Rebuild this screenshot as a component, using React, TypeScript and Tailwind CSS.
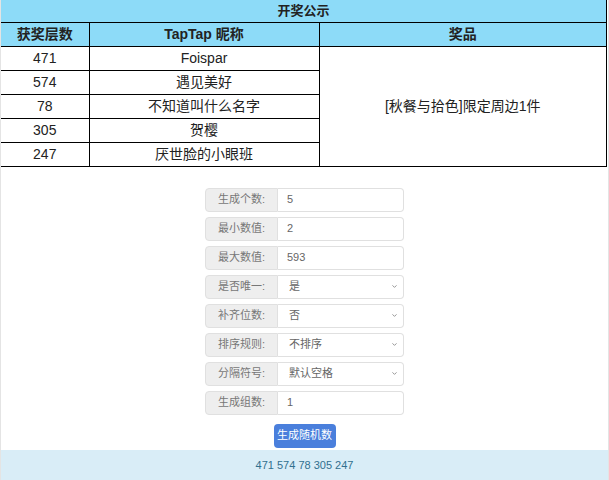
import { ChevronDown } from "lucide-react";

const winners = [
  { floor: "471", name: "Foispar" },
  { floor: "574", name: "遇见美好" },
  { floor: "78", name: "不知道叫什么名字" },
  { floor: "305", name: "贺樱" },
  { floor: "247", name: "厌世脸的小眼班" },
];

const fields: { label: string; value: string; select?: boolean }[] = [
  { label: "生成个数:", value: "5" },
  { label: "最小数值:", value: "2" },
  { label: "最大数值:", value: "593" },
  { label: "是否唯一:", value: "是", select: true },
  { label: "补齐位数:", value: "否", select: true },
  { label: "排序规则:", value: "不排序", select: true },
  { label: "分隔符号:", value: "默认空格", select: true },
  { label: "生成组数:", value: "1" },
];

const FormRow = ({
  label,
  value,
  select,
}: {
  label: string;
  value: string;
  select?: boolean;
}) => (
  <div className="flex h-[24px] w-[199px]">
    <div className="flex w-[73px] shrink-0 items-center justify-center rounded-l-[4px] border border-[#e0e0e0] bg-[#eeeeee] text-[11px] text-[#777]">
      {label}
    </div>
    <div className="flex flex-1 items-center justify-between rounded-r-[4px] border border-l-0 border-[#e0e0e0] bg-white pl-[9px] pr-[5px] text-[11px] text-[#666]">
      <span className={select ? "pl-[2px]" : ""}>{value}</span>
      {select && <ChevronDown className="h-[7px] w-[7px] text-[#888]" strokeWidth={3} />}
    </div>
  </div>
);

export default function App() {
  return (
    <div
      className="flex h-[480px] w-[609px] flex-col overflow-hidden border-x border-[#e4e4e4] bg-white"
      style={{ fontFamily: '"Liberation Sans", "Noto Sans CJK SC", sans-serif' }}
    >
      <table className="w-[606px] border-collapse text-[14px] text-[#222]">
        <thead>
          <tr className="h-[22px] bg-[#8ddbf8]">
            <th colSpan={3} className="border-b border-r border-black p-0 text-[13px] font-bold">
              开奖公示
            </th>
          </tr>
          <tr className="h-[24px] bg-[#8ddbf8]">
            <th className="w-[88px] border-b border-r border-black p-0 font-bold">获奖层数</th>
            <th className="w-[230px] border-b border-r border-black p-0 font-bold">TapTap 昵称</th>
            <th className="border-b border-r border-black p-0 font-bold">奖品</th>
          </tr>
        </thead>
        <tbody>
          {winners.map((w, i) => (
            <tr key={w.floor} className="h-[24px]">
              <td className="border-b border-r border-black p-0 text-center">{w.floor}</td>
              <td className="border-b border-r border-black p-0 text-center">{w.name}</td>
              {i === 0 && (
                <td rowSpan={5} className="border-b border-r border-black p-0 text-center">
                  [秋餐与拾色]限定周边1件
                </td>
              )}
            </tr>
          ))}
        </tbody>
      </table>

      <div className="flex flex-col items-center gap-[5px] pt-[21px]">
        {fields.map((f) => (
          <FormRow key={f.label} label={f.label} value={f.value} select={f.select} />
        ))}
        <button className="mt-[4px] h-[24px] w-[62px] rounded-[4px] bg-[#4a7fdc] text-[11px] text-white">
          生成随机数
        </button>
      </div>

      <div className="mt-auto flex h-[30px] items-center justify-center bg-[#d9edf7] text-[11px] text-[#31708f]">
        471 574 78 305 247
      </div>
    </div>
  );
}
